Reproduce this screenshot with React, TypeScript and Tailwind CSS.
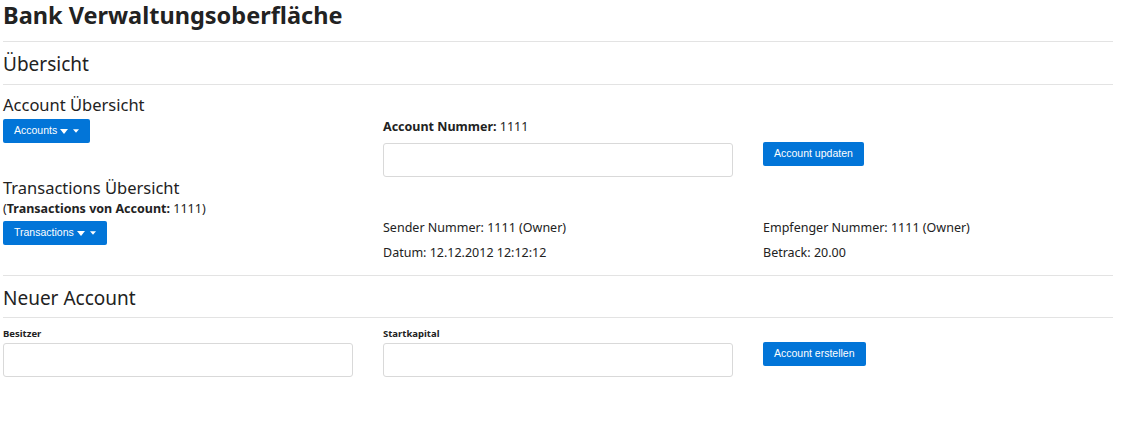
import React from "react";

function Caret({ size = 8 }: { size?: number }) {
  return (
    <svg width={size} height={size / 2 + 1} viewBox="0 0 10 6" className="inline-block">
      <path d="M0 0 L10 0 L5 6 Z" fill="white" />
    </svg>
  );
}

function DropButton({ label }: { label: string }) {
  return (
    <button className="flex items-center h-[24px] px-[11px] bg-[#0275d8] rounded-[2px] text-white text-[10.5px] font-['Liberation_Sans',Arial,sans-serif]">
      <span>{label}</span>
      <span className="ml-[3px] flex items-center"><Caret size={8} /></span>
      <span className="ml-[5px] flex items-center"><Caret size={6} /></span>
    </button>
  );
}

function BlueButton({ label }: { label: string }) {
  return (
    <button className="h-[24px] px-[11px] bg-[#0275d8] rounded-[2px] text-white text-[10.5px] font-['Liberation_Sans',Arial,sans-serif]">
      {label}
    </button>
  );
}

function Field() {
  return <input type="text" className="block w-[350px] h-[34px] border border-[#d9d9d9] rounded-[3px] bg-white" />;
}

export default function App() {
  return (
    <div className="w-[1121px] h-[421px] bg-white text-[#222] font-['Noto_Sans',sans-serif] pl-[3px] pr-[8px]">
      <h1 className="text-[23.5px] font-bold leading-[30px]">Bank Verwaltungsoberfläche</h1>
      <hr className="mt-[11px] border-t border-[#e3e3e3]" />
      <h2 className="text-[19px] leading-[26px] mt-[9px]">Übersicht</h2>
      <hr className="mt-[7px] border-t border-[#e3e3e3]" />

      <div className="grid grid-cols-[350px_350px_350px] gap-x-[30px] text-[12.5px]">
        <div>
          <h3 className="text-[16.5px] leading-[24px] mt-[8px]">Account Übersicht</h3>
          <div className="mt-[2px]"><DropButton label="Accounts" /></div>
        </div>
        <div>
          <p className="mt-[33px] leading-[18px]"><b>Account Nummer:</b> 1111</p>
          <div className="mt-[7px]"><Field /></div>
        </div>
        <div className="pt-[57px]">
          <BlueButton label="Account updaten" />
        </div>

        <div>
          <h3 className="text-[16.5px] leading-[24px] mt-[-1px]">Transactions Übersicht</h3>
          <p className="leading-[18px]">(<b>Transactions von Account:</b> 1111)</p>
          <div className="mt-[3px]"><DropButton label="Transactions" /></div>
        </div>
        <div className="pt-[42px] leading-[18px]">
          <p>Sender Nummer: 1111 (Owner)</p>
          <p className="mt-[7px]">Datum: 12.12.2012 12:12:12</p>
        </div>
        <div className="pt-[42px] leading-[18px]">
          <p>Empfenger Nummer: 1111 (Owner)</p>
          <p className="mt-[7px]">Betrack: 20.00</p>
        </div>
      </div>

      <hr className="mt-[13px] border-t border-[#e3e3e3]" />
      <h2 className="text-[19px] leading-[26px] mt-[9px]">Neuer Account</h2>
      <hr className="mt-[6px] border-t border-[#e3e3e3]" />

      <div className="grid grid-cols-[350px_350px_350px] gap-x-[30px] mt-[9px]">
        <div>
          <label className="block text-[9.5px] font-bold leading-[14px]">Besitzer</label>
          <div className="mt-[2px]"><Field /></div>
        </div>
        <div>
          <label className="block text-[9.5px] font-bold leading-[14px]">Startkapital</label>
          <div className="mt-[2px]"><Field /></div>
        </div>
        <div className="pt-[12px]">
          <BlueButton label="Account erstellen" />
        </div>
      </div>
    </div>
  );
}
